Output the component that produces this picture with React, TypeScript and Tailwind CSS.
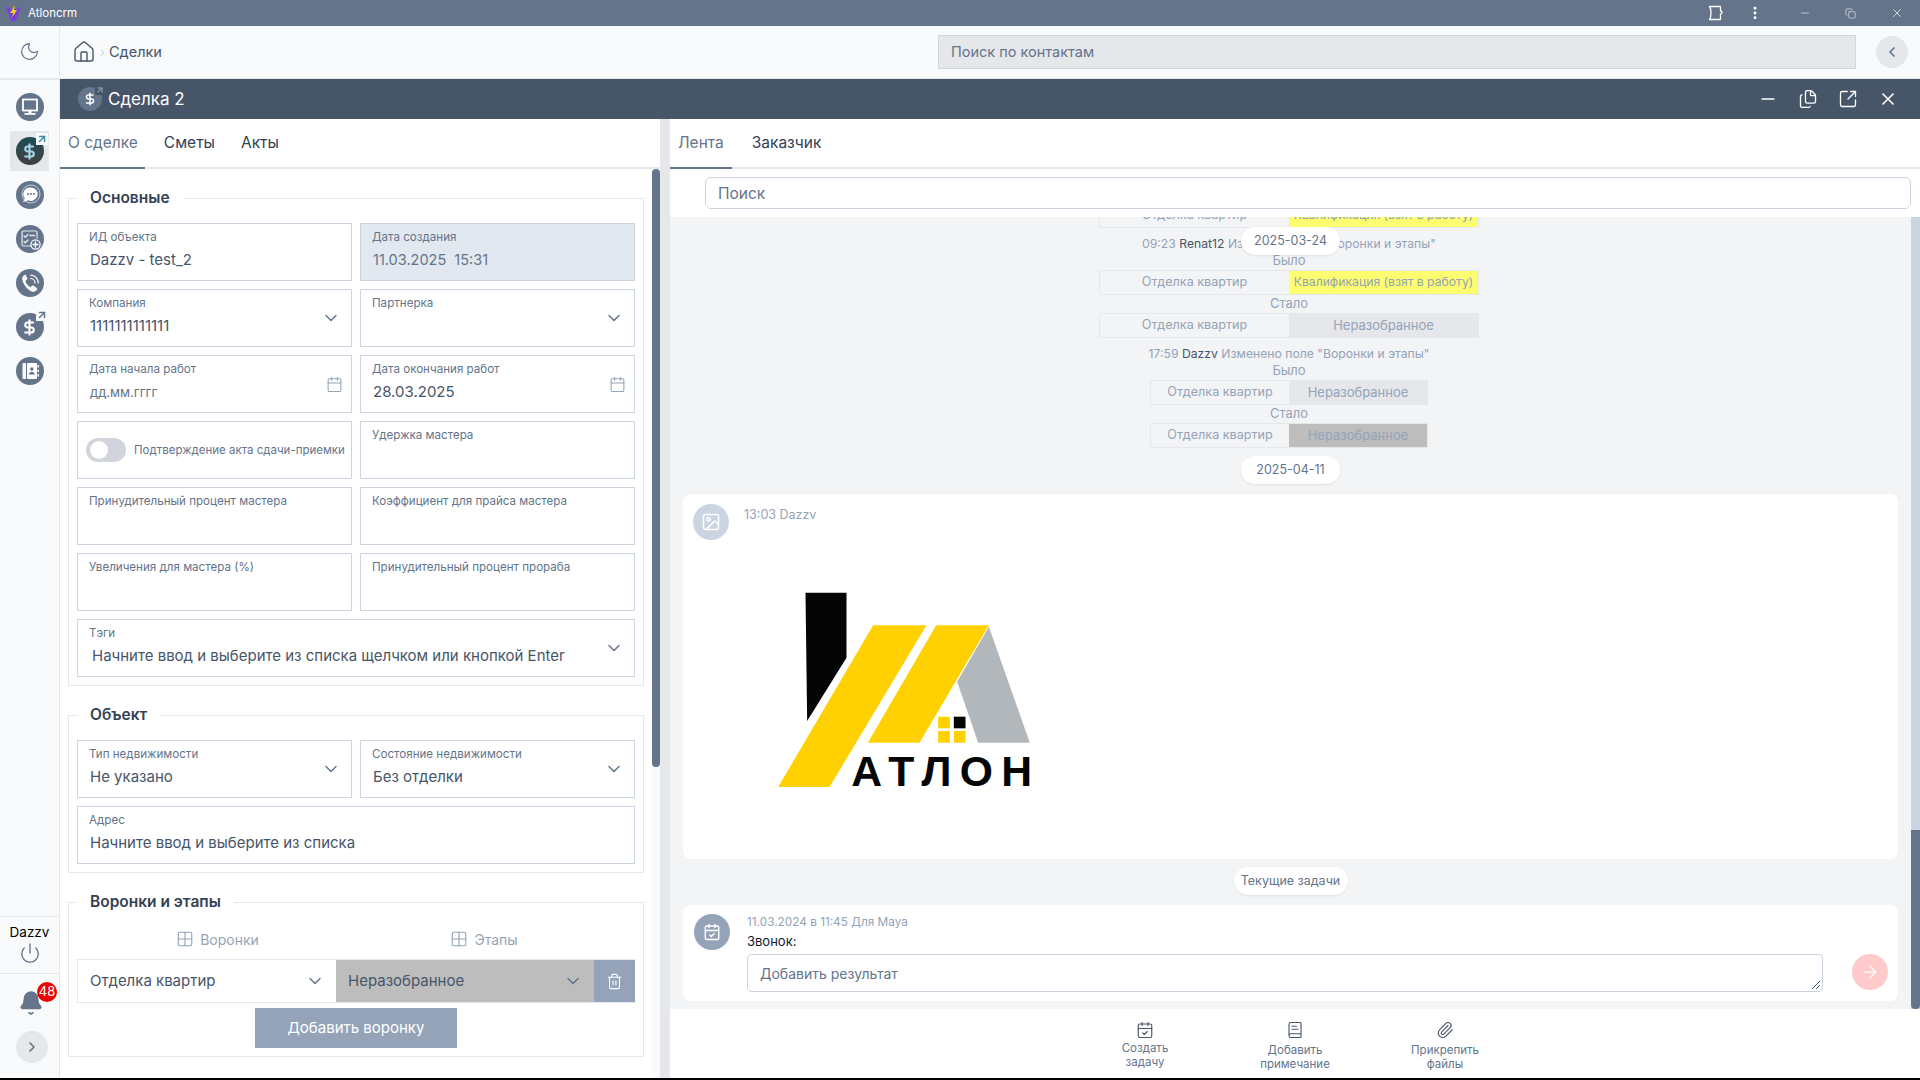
import React from 'react';
import {
  ArrowRight, ArrowUpRight, BookText, Calendar, CalendarCheck, ChevronDown, ChevronLeft, ChevronRight, DollarSign,
  EllipsisVertical, Files, Grid2x2, House, Image, Minus, Moon, Paperclip, Power,
  SquareArrowOutUpRight, Trash2, X, Copy, Bell,
} from 'lucide-react';

const font = { fontFamily: 'Inter, "Noto Sans", sans-serif' };

function Circle({ children, active }: { children: React.ReactNode; active?: boolean }) {
  return (
    <div className={active
      ? 'relative flex h-7 w-7 items-center justify-center rounded-full bg-gradient-to-b from-[#164e54] to-[#404040]'
      : 'relative flex h-7 w-7 items-center justify-center rounded-full bg-[#64748b]'}>
      {children}
    </div>
  );
}

function DealIcon({ active }: { active?: boolean }) {
  return (
    <Circle active={active}>
      <DollarSign size={17} strokeWidth={3} className={active ? 'text-[#a5d8e8]' : 'text-white'} />
      <div className="absolute -top-[4px] -right-[4px] bg-[#f8fafc]">
        <ArrowUpRight size={12} strokeWidth={3} className={active ? 'text-[#3d8b9c]' : 'text-[#64748b]'} />
      </div>
    </Circle>
  );
}

function MonitorGlyph() {
  return (
    <svg viewBox="0 0 28 28" className="h-7 w-7">
      <rect x="7" y="6.5" width="14" height="11" fill="none" stroke="#fff" strokeWidth="1.8" />
      <rect x="12.5" y="17.5" width="3" height="3" fill="#fff" />
      <rect x="8.5" y="20" width="11" height="1.8" fill="#fff" />
    </svg>
  );
}

function ChatGlyph() {
  return (
    <svg viewBox="0 0 28 28" className="h-7 w-7">
      <circle cx="15" cy="13" r="9" fill="none" stroke="#cbd5e1" strokeWidth="0.9" />
      <path d="M15 6.5a6.7 6.7 0 1 1-3 12.7c-1.5 1.2-3.4 1.6-5.5 1.4 1.3-.9 2-2 2.2-3.4A6.7 6.7 0 0 1 15 6.5z" fill="#fff" />
      <circle cx="12" cy="13" r="1" fill="#64748b" />
      <circle cx="15" cy="13" r="1" fill="#64748b" />
      <circle cx="18" cy="13" r="1" fill="#64748b" />
    </svg>
  );
}

function TasksGlyph() {
  return (
    <svg viewBox="0 0 28 28" className="h-7 w-7" fill="none" stroke="#e2e8f0" strokeLinecap="round">
      <path d="M17 21H7.5A1.5 1.5 0 0 1 6 19.5v-12A1.5 1.5 0 0 1 7.5 6h12A1.5 1.5 0 0 1 21 7.5V13" strokeWidth="1.2" />
      <path d="M8 11l1.3 1.3L12 9.5M8 16.5l1.3 1.3L12 15M14 10.5h4.5" strokeWidth="1.4" />
      <circle cx="19.5" cy="19.5" r="4.6" strokeWidth="1.2" stroke="#fff" fill="#64748b" />
      <path d="M19.5 17v5M17 19.5h5" strokeWidth="1.4" stroke="#fff" />
    </svg>
  );
}

function PhoneGlyph() {
  return (
    <svg viewBox="0 0 28 28" className="h-7 w-7">
      <path d="M8.2 6.2c-1.4.8-2.3 2.2-2 4 .7 4.9 5.1 10.7 9.8 12.2 2.1.7 4.1 0 5-1.8.4-.8.1-1.4-.6-1.9l-2.8-1.9c-.7-.4-1.3-.4-1.9.2l-1.3 1.2c-2.4-1.4-4.2-3.7-5.1-6.3l1.4-1.1c.6-.5.8-1.1.5-1.8l-1.3-2.7c-.4-.7-1-.6-1.7-.1z" fill="#fff" />
      <path d="M14.5 9.5a4.5 4.5 0 0 1 4.5 4.5M14.8 6.2a7.7 7.7 0 0 1 7.5 7.8" fill="none" stroke="#fff" strokeWidth="1.2" strokeLinecap="round" />
    </svg>
  );
}

function BookGlyph() {
  return (
    <svg viewBox="0 0 28 28" className="h-7 w-7">
      <rect x="6.5" y="6" width="3.5" height="16" rx="0.8" fill="#fff" />
      <rect x="11" y="6" width="10" height="16" rx="1" fill="#fff" />
      <circle cx="15.8" cy="12" r="1.7" fill="#64748b" />
      <path d="M12.8 17.5c.3-2 1.5-2.8 3-2.8s2.7.8 3 2.8z" fill="#64748b" />
      <rect x="21.5" y="8" width="1.5" height="2.5" fill="#fff" />
      <rect x="21.5" y="12.5" width="1.5" height="2.5" fill="#fff" />
      <rect x="21.5" y="17" width="1.5" height="2.5" fill="#fff" />
    </svg>
  );
}

function NavItem({ children, active }: { children: React.ReactNode; active?: boolean }) {
  return (
    <div className={active ? 'flex h-10 w-[39px] items-center justify-center bg-[#e5e7eb]' : 'flex h-10 w-[39px] items-center justify-center'}>
      {children}
    </div>
  );
}

function Sidebar() {
  return (
    <aside className="flex w-[60px] flex-col border-r border-[#e5e7eb] bg-[#f8fafc]">
      <div className="flex h-[54px] items-center justify-center border-b-2 border-[#e5e7eb] pb-[2px]">
        <Moon size={21} strokeWidth={1.4} className="text-[#64748b]" />
      </div>
      <nav className="flex flex-col items-center gap-1 pt-[7px]">
        <NavItem><Circle><MonitorGlyph /></Circle></NavItem>
        <NavItem active><DealIcon active /></NavItem>
        <NavItem><Circle><ChatGlyph /></Circle></NavItem>
        <NavItem><Circle><TasksGlyph /></Circle></NavItem>
        <NavItem><Circle><PhoneGlyph /></Circle></NavItem>
        <NavItem><DealIcon /></NavItem>
        <NavItem><Circle><BookGlyph /></Circle></NavItem>
      </nav>
      <div className="mt-auto flex flex-col items-center">
        <div className="flex h-[57px] w-full flex-col items-center border-t border-[#e5e7eb] pt-[6px]">
          <span className="text-[13.5px] leading-[18px] text-black">Dazzv</span>
          <Power size={22} strokeWidth={1.5} className="mt-[1px] text-[#64748b]" />
        </div>
        <div className="flex h-[58px] w-full items-end justify-center border-t border-[#e5e7eb] pb-[15px]">
          <div className="relative ml-[3px] h-[26px] w-[26px]">
            <Bell size={26} fill="#64748b" strokeWidth={1.5} className="text-[#64748b]" />
            <div className="absolute -top-[8px] -right-[13px] flex h-5 w-5 items-center justify-center rounded-full bg-[#ef0000] text-[13px] text-white">48</div>
          </div>
        </div>
        <div className="mb-[15px] ml-[4px] flex h-8 w-8 items-center justify-center rounded-full bg-[#e5e7eb]">
          <ChevronRight size={16} strokeWidth={2.5} className="text-[#64748b]" />
        </div>
      </div>
    </aside>
  );
}

function Field({ label, value, muted, chevron, calendar, small, valueClass, className }: {
  label: string; value?: string; muted?: boolean; chevron?: boolean; calendar?: boolean; small?: boolean; valueClass?: string; className?: string;
}) {
  return (
    <div className={`flex h-[58px] items-center border border-[#cbd5e1] pr-[10px] pl-[11px] ${muted ? 'bg-[#e2e8f0]' : 'bg-white'} ${className ?? ''}`}>
      <div className="h-full min-w-0 flex-1 pt-[6px]">
        <div className="text-[11.6px] leading-[14px] text-[#64748b]">{label}</div>
        {value && (
          <div className={`mt-[5px] pl-[1px] leading-[22px] whitespace-pre ${small ? 'text-[13px] text-[#64748b]' : muted ? 'text-[14.5px] text-[#64748b]' : 'text-[15px] text-[#475569]'} ${valueClass ?? ''}`}>{value}</div>
        )}
      </div>
      {chevron && <ChevronDown size={20} strokeWidth={1.7} className="text-[#64748b]" />}
      {calendar && <Calendar size={17} strokeWidth={1.5} className="-mr-[2px] text-[#94a3b8]" />}
    </div>
  );
}

function Group({ title, children, className }: { title: string; children: React.ReactNode; className?: string }) {
  return (
    <fieldset className={`w-[576px] border border-[#e2e8f0] px-2 pb-2 ${className ?? ''}`}>
      <legend className="px-[13px] text-[15.5px] leading-6 font-semibold text-[#334155]">{title}</legend>
      {children}
    </fieldset>
  );
}

function DealForm() {
  return (
    <div className="flex w-[600px] flex-col">
      <Tabs items={['О сделке', 'Сметы', 'Акты']} underline="w-[85px]" gap="gap-[26px]" pad="pl-2" />
      <div className="flex min-h-0 flex-1">
        <div className="w-[592px] overflow-hidden pt-[17px] pl-2">
          <Group title="Основные">
            <div className="mt-[13px] grid grid-cols-2 gap-2">
              <Field label="ИД объекта" value="Dazzv - test_2" />
              <Field label="Дата создания" value="11.03.2025  15:31" muted />
              <Field label="Компания" value="1111111111111" chevron />
              <Field label="Партнерка" chevron />
              <Field label="Дата начала работ" value="дд.мм.гггг" small calendar />
              <Field label="Дата окончания работ" value="28.03.2025" calendar />
              <div className="flex h-[58px] items-center gap-2 border border-[#cbd5e1] bg-white pl-2">
                <div className="flex h-6 w-10 shrink-0 items-center rounded-full bg-[#d1d5db] pl-[4px]">
                  <div className="h-[18px] w-[18px] rounded-full bg-white" />
                </div>
                <span className="pt-[1px] text-[11.5px] whitespace-nowrap text-[#64748b]">Подтверждение акта сдачи-приемки</span>
              </div>
              <Field label="Удержка мастера" />
              <Field label="Принудительный процент мастера" />
              <Field label="Коэффициент для прайса мастера" />
              <Field label="Увеличения для мастера (%)" />
              <Field label="Принудительный процент прораба" />
              <Field label="Тэги" value="Начните ввод и выберите из списка щелчком или кнопкой Enter" chevron valueClass="pl-[3px]" className="col-span-2" />
            </div>
          </Group>
          <Group title="Объект" className="mt-[17px]">
            <div className="mt-[13px] grid grid-cols-2 gap-2">
              <Field label="Тип недвижимости" value="Не указано" chevron />
              <Field label="Состояние недвижимости" value="Без отделки" chevron />
              <Field label="Адрес" value="Начните ввод и выберите из списка" valueClass="text-[#64748b]" className="col-span-2" />
            </div>
          </Group>
          <Group title="Воронки и этапы" className="mt-[17px]">
            <div className="mt-[14px] grid h-[22px] grid-cols-2 text-[14px] text-[#94a3b8]">
              <div className="flex items-center justify-center gap-[6px] pl-[2px]"><Grid2x2 size={18} strokeWidth={1.5} />Воронки</div>
              <div className="flex items-center justify-center gap-[6px] pr-[23px]"><Grid2x2 size={18} strokeWidth={1.5} />Этапы</div>
            </div>
            <div className="mt-[9px] flex h-[44px] border-y border-l border-[#e2e8f0] text-[15px]">
              <div className="flex w-[257px] items-center justify-between bg-white pr-[10px] pl-[12px] text-[#475569]">
                Отделка квартир
                <ChevronDown size={20} strokeWidth={1.7} className="text-[#64748b]" />
              </div>
              <div className="ml-[1px] flex flex-1 items-center justify-between bg-[#bdbdbd] pr-[11px] pl-[12px] text-[#475569]">
                Неразобранное
                <ChevronDown size={20} strokeWidth={1.7} className="text-[#64748b]" />
              </div>
              <div className="flex w-[41px] items-center justify-center bg-[#94a3b8]">
                <Trash2 size={17} strokeWidth={1.6} className="text-white" />
              </div>
            </div>
            <div className="mx-auto mt-[5px] flex h-10 w-[202px] items-center justify-center bg-[#94a3b8] text-[15px] text-white">Добавить воронку</div>
          </Group>
        </div>
        <div className="w-2 bg-[#f8fafc]">
          <div className="h-[598px] rounded-[4px] bg-[#64748b]" />
        </div>
      </div>
    </div>
  );
}

function Tabs({ items, underline, gap, pad }: { items: string[]; underline: string; gap: string; pad: string }) {
  return (
    <div className="relative h-[50px] border-b-2 border-[#e5e7eb] bg-white">
      <div className={`flex h-[48px] items-center text-[15.5px] text-[#334155] ${gap} ${pad}`}>
        {items.map((item, i) => (
          <span key={item} className={i === 0 ? 'text-[#64748b]' : ''}>{item}</span>
        ))}
      </div>
      <div className={`absolute -bottom-[2px] left-0 h-[2px] bg-[#64748b] ${underline}`} />
    </div>
  );
}

function StageRow({ wide, highlight, stage }: { wide?: boolean; highlight?: 'yellow' | 'dark'; stage: string }) {
  const cell = highlight === 'yellow' ? 'bg-[#fdfd70] text-[12.2px]' : highlight === 'dark' ? 'bg-[#bdbdbd] text-[13px]' : 'bg-[#e5e7eb] text-[13px]';
  return (
    <div className={`mx-auto flex h-[25px] border border-[#e5e7eb] text-[#94a3b8] ${wide ? 'w-[380px]' : 'w-[278px]'}`}>
      <div className="flex flex-1 items-center justify-center text-[12.6px]">Отделка квартир</div>
      <div className={`flex flex-1 items-center justify-center whitespace-nowrap ${cell}`}>{stage}</div>
    </div>
  );
}

function Note({ children }: { children: React.ReactNode }) {
  return <div className="mb-[2px] h-4 text-center text-[13px] leading-4 text-[#94a3b8]">{children}</div>;
}

function LogHead({ time, name, text }: { time: string; name: string; text: string }) {
  return (
    <div className="mt-2 h-4 text-center text-[12.2px] leading-4 text-[#94a3b8]">
      {time} <span className="text-[#475569]">{name}</span> {text}
    </div>
  );
}

function Pill({ children, className }: { children: React.ReactNode; className?: string }) {
  return (
    <div className={`mx-auto flex h-7 items-center justify-center rounded-full bg-white text-[12.5px] text-[#64748b] shadow-[0_1px_2px_rgba(0,0,0,0.08)] ${className ?? ''}`}>
      {children}
    </div>
  );
}

function AtlonLogo() {
  return (
    <svg viewBox="290 90 770 600" className="mt-[51px] ml-[94px] h-[200px] w-[257px] overflow-visible">
      <polygon points="375,95 498,95 498,290 380,480" fill="#050505" />
      <polygon points="578,193 738,193 447,678 293,678" fill="#ffd100" />
      <polygon points="767,193 925,193 717,545 562,545" fill="#ffd100" />
      <polygon points="925,197 1048,545 893,545 830,362" fill="#b1b7ba" />
      <rect x="773" y="467" width="35" height="35" fill="#ffd100" />
      <rect x="820" y="467" width="35" height="35" fill="#050505" />
      <rect x="773" y="510" width="35" height="35" fill="#ffd100" />
      <rect x="820" y="510" width="35" height="35" fill="#ffd100" />
      <text x="512" y="675" textLength="543" lengthAdjust="spacing" fontSize="128" fontWeight="700" fill="#050505" fontFamily='"Liberation Sans", sans-serif'>АТЛОН</text>
    </svg>
  );
}

function ActionButton({ icon, lines, top }: { icon: React.ReactNode; lines: string[]; top: string }) {
  return (
    <div className="flex w-[100px] flex-col items-center text-[11.5px] leading-[14px] text-[#64748b]">
      {icon}
      <div className={`text-center ${top}`}>{lines.map(l => <div key={l}>{l}</div>)}</div>
    </div>
  );
}

function Feed() {
  return (
    <div className="flex min-w-0 flex-1 flex-col">
      <Tabs items={['Лента', 'Заказчик']} underline="w-[62px]" gap="gap-[28px]" pad="pl-2" />
      <div className="h-[48px] bg-white pt-2 pr-[9px] pl-[35px]">
        <div className="flex h-[32px] items-center rounded-[6px] border border-[#cbd5e1] bg-white px-[12px] pt-[1px] text-[15.5px] text-[#64748b]">Поиск</div>
      </div>
      <div className="flex h-[792px]">
        <div className="relative w-[1241px] overflow-hidden bg-[#f3f4f6] px-[13px]">
          <Pill className="absolute top-[10px] left-[571px] w-[99px]">2025-03-24</Pill>
          <div className="w-[1212px]">
            <div className="-mt-[14px]"><StageRow wide highlight="yellow" stage="Квалификация (взят в работу)" /></div>
            <LogHead time="09:23" name="Renat12" text='Изменено поле "Воронки и этапы"' />
            <Note>Было</Note>
            <StageRow wide highlight="yellow" stage="Квалификация (взят в работу)" />
            <Note>Стало</Note>
            <StageRow wide stage="Неразобранное" />
            <LogHead time="17:59" name="Dazzv" text='Изменено поле "Воронки и этапы"' />
            <Note>Было</Note>
            <StageRow stage="Неразобранное" />
            <Note>Стало</Note>
            <StageRow highlight="dark" stage="Неразобранное" />
          </div>
          <Pill className="mt-2 w-[99px]">2025-04-11</Pill>
          <div className="mt-[10px] flex h-[365px] rounded-[8px] bg-white">
            <div className="flex flex-col">
              <div className="flex items-start pt-[10px] pl-[10px]">
                <div className="flex h-9 w-9 items-center justify-center rounded-full bg-[#cbd5e1]"><Image size={20} strokeWidth={1.8} className="text-white" /></div>
                <div className="mt-[2px] ml-[15px] text-[12.5px] text-[#94a3b8]">13:03 Dazzv</div>
              </div>
              <AtlonLogo />
            </div>
          </div>
          <Pill className="mt-[8px] w-[114px]">Текущие задачи</Pill>
          <div className="mt-[10px] flex h-[96px] rounded-[8px] bg-white pt-2 pl-[11px]">
            <div className="mt-[1px] flex h-9 w-9 shrink-0 items-center justify-center rounded-full bg-[#94a3b8]"><CalendarCheck size={18} strokeWidth={1.8} className="text-white" /></div>
            <div className="ml-[17px] flex-1">
              <div className="text-[11.8px] leading-[18px] text-[#94a3b8]">11.03.2024 в 11:45 Для Maya</div>
              <div className="mt-[1px] text-[13px] leading-[18px] text-[#111827]">Звонок:</div>
              <div className="mt-[4px] flex items-start">
                <div className="relative flex h-[38px] w-[1076px] items-center rounded-[4px] border border-[#cbd5e1] px-[12px] text-[14px] text-[#64748b]">
                  Добавить результат
                  <svg viewBox="0 0 10 10" className="absolute right-[1px] bottom-[1px] h-[10px] w-[10px]" stroke="#475569" strokeWidth="1">
                    <path d="M1 9L9 1M5 9L9 5" />
                  </svg>
                </div>
                <div className="ml-[29px] flex h-9 w-9 items-center justify-center rounded-full bg-[#fecaca]"><ArrowRight size={20} strokeWidth={1.5} className="text-white" /></div>
              </div>
            </div>
          </div>
        </div>
        <div className="w-[9px] bg-[#cbd5e1] pt-[613px]">
          <div className="h-[179px] rounded-b-[4px] bg-[#64748b]" />
        </div>
      </div>
      <div className="flex flex-1 justify-center gap-[50px] bg-white pt-[12px]">
        <ActionButton icon={<CalendarCheck size={18} strokeWidth={1.5} className="text-[#475569]" />} lines={['Создать', 'задачу']} top="mt-[2px]" />
        <ActionButton icon={<BookText size={18} strokeWidth={1.5} className="text-[#475569]" />} lines={['Добавить', 'примечание']} top="mt-[4px]" />
        <ActionButton icon={<Paperclip size={18} strokeWidth={1.5} className="text-[#475569]" />} lines={['Прикрепить', 'файлы']} top="mt-[4px]" />
      </div>
    </div>
  );
}

export default function App() {
  return (
    <div className="flex h-[1080px] w-[1920px] flex-col overflow-hidden bg-black" style={font}>
      <header className="flex h-[26px] items-center bg-[#64748b] pl-[6px] text-white">
        <svg viewBox="0 0 15 16" className="h-[16px] w-[15px]">
          <path d="M0 2 L4 3 L7.5 13 L11 3 L15 2 L9.5 16 L5.5 16 Z" fill="#7c3aed" />
          <path d="M5 4.5 L7.5 13 L10 4.5 Z" fill="#4c1d95" />
          <path d="M9 0 L4 8 L7 8 L6 13 L11 5 L8 5 Z" fill="#facc15" />
        </svg>
        <span className="ml-[7px] pt-[1px] text-[11.5px]">Atloncrm</span>
        <div className="ml-auto flex items-center">
          <svg viewBox="0 0 16 16" className="mr-[23px] h-4 w-4" fill="none" stroke="#fff" strokeWidth="1.3" strokeLinejoin="round">
            <path d="M1.5 1.5h11v4.500c2 0 2 3 0 3v5.500h-11c1.500-2 1.500-3 1.500-6.500s0-4.500-1.500-6.500z" />
          </svg>
          <EllipsisVertical size={16} strokeWidth={2.4} className="mr-[36px]" />
          <Minus size={12} strokeWidth={1.2} className="mr-[34px]" />
          <Copy size={11} strokeWidth={1.2} className="mr-[34px]" />
          <X size={14} strokeWidth={1.2} className="mr-[16px]" />
        </div>
      </header>
      <div className="flex h-[1052px]">
        <Sidebar />
        <main className="flex min-w-0 flex-1 flex-col">
          <div className="flex h-[53px] items-center border-b border-[#e5e7eb] bg-[#f8fafc] pr-[12px] pl-[12px]">
            <House size={24} strokeWidth={1.4} className="text-[#475569]" />
            <ChevronRight size={11} strokeWidth={1.3} className="mx-[1px] text-[#94a3b8]" />
            <span className="text-[14.5px] text-[#475569]">Сделки</span>
            <div className="ml-auto flex h-[34px] w-[918px] items-center border border-[#d1d5db] bg-[#e5e7eb] px-[12px] text-[14.5px] text-[#64748b]">Поиск по контактам</div>
            <div className="ml-[20px] flex h-8 w-8 items-center justify-center rounded-full bg-[#e5e7eb]"><ChevronLeft size={16} strokeWidth={2.5} className="text-[#64748b]" /></div>
          </div>
          <div className="flex h-[40px] items-center bg-[#475569] pr-[22px] pl-[18px] text-white">
            <div className="relative flex h-6 w-6 items-center justify-center rounded-full bg-[#64748b]">
              <DollarSign size={14} strokeWidth={2.6} />
              <div className="absolute -top-[2px] -right-[3px] bg-[#475569]"><ArrowUpRight size={10} strokeWidth={2.5} className="text-[#94a3b8]" /></div>
            </div>
            <span className="ml-[6px] pt-[1px] text-[17px]">Сделка 2</span>
            <div className="ml-auto flex items-center gap-[20px]">
              <Minus size={20} strokeWidth={2} />
              <Files size={20} strokeWidth={1.6} />
              <SquareArrowOutUpRight size={20} strokeWidth={1.6} />
              <X size={20} strokeWidth={2} />
            </div>
          </div>
          <div className="flex min-h-0 flex-1 bg-white">
            <DealForm />
            <div className="w-[10px] bg-[#e5e7eb]" />
            <Feed />
          </div>
        </main>
      </div>
      <div className="h-[2px] bg-black" />
    </div>
  );
}
